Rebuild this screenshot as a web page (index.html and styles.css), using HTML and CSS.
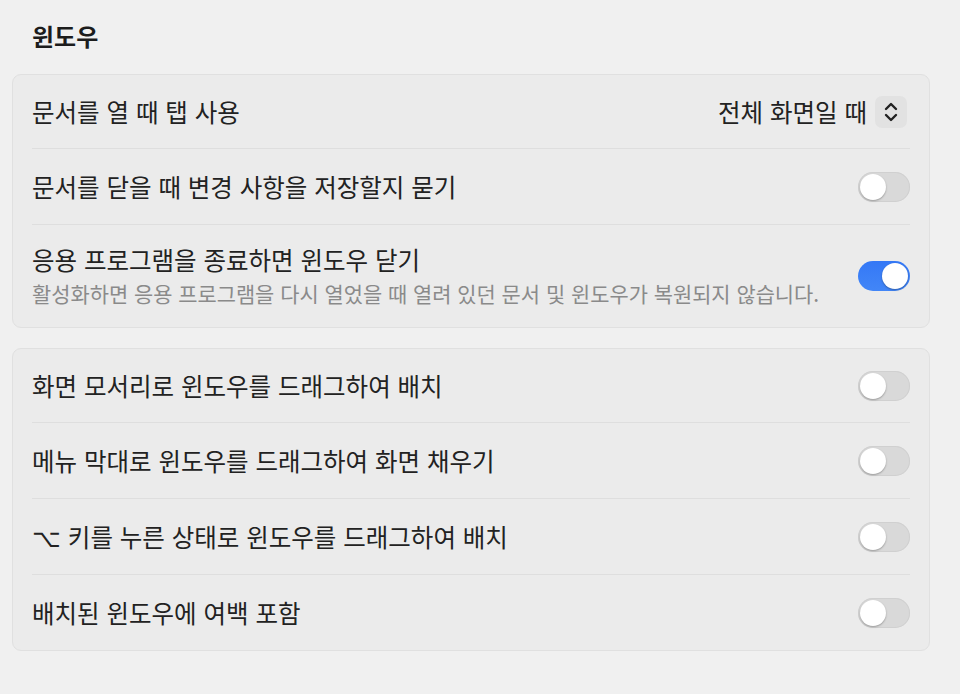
FILE: index.html
```html
<!DOCTYPE html>
<html lang="ko">
<head>
    <meta charset="UTF-8">
    <meta name="viewport" content="width=device-width, initial-scale=1.0">
    <title>윈도우</title>
    <link rel="stylesheet" href="styles.css">
</head>
<body>
    <div class="page">
        <h2 class="section-title">윈도우</h2>

        <div class="group">
            <div class="row">
                <div class="label">문서를 열 때 탭 사용</div>
                <div class="popup">
                    <span class="popup-value">전체 화면일 때</span>
                    <span class="popup-button">
                        <svg width="16" height="26" viewBox="0 0 16 26">
                            <path d="M3 10 L8 5 L13 10 M3 16 L8 21 L13 16" fill="none" stroke="#222" stroke-width="2.4" stroke-linecap="round" stroke-linejoin="round"/>
                        </svg>
                    </span>
                </div>
            </div>
            <div class="row">
                <div class="label">문서를 닫을 때 변경 사항을 저장할지 묻기</div>
                <div class="toggle"><span class="knob"></span></div>
            </div>
            <div class="row tall">
                <div class="text">
                    <div class="label">응용 프로그램을 종료하면 윈도우 닫기</div>
                    <div class="hint">활성화하면 응용 프로그램을 다시 열었을 때 열려 있던 문서 및 윈도우가 복원되지 않습니다.</div>
                </div>
                <div class="toggle on"><span class="knob"></span></div>
            </div>
        </div>

        <div class="group">
            <div class="row">
                <div class="label">화면 모서리로 윈도우를 드래그하여 배치</div>
                <div class="toggle"><span class="knob"></span></div>
            </div>
            <div class="row">
                <div class="label">메뉴 막대로 윈도우를 드래그하여 화면 채우기</div>
                <div class="toggle"><span class="knob"></span></div>
            </div>
            <div class="row">
                <div class="label">⌥ 키를 누른 상태로 윈도우를 드래그하여 배치</div>
                <div class="toggle"><span class="knob"></span></div>
            </div>
            <div class="row">
                <div class="label">배치된 윈도우에 여백 포함</div>
                <div class="toggle"><span class="knob"></span></div>
            </div>
        </div>
    </div>
</body>
</html>
```

FILE: styles.css
```css
body {
    margin: 0;
    background-color: #f0f0f0;
    font-family: "Noto Sans CJK KR", "Noto Sans", sans-serif;
    color: #222;
}
.page {
    width: 918px;
    padding: 17px 0 0 12px;
}
.section-title {
    margin: 0 0 19px 20px;
    font-size: 24px;
    font-weight: bold;
    line-height: 38px;
    color: #1c1c1c;
}
.group {
    background-color: #ebebeb;
    border: 1px solid #e0e0e0;
    border-radius: 9px;
    padding: 0 19px;
    margin-bottom: 20px;
}
.row {
    display: flex;
    align-items: center;
    justify-content: space-between;
    min-height: 75px;
}
.row:first-child {
    min-height: 73px;
}
.row + .row {
    border-top: 1px solid #dedede;
}
.row.tall {
    min-height: 102px;
}
.label {
    font-size: 24.5px;
    line-height: 30px;
}
.hint {
    font-size: 20.9px;
    line-height: 28px;
    color: #8a8a8a;
    margin-top: 4px;
}
.popup {
    display: flex;
    align-items: center;
    gap: 8px;
    margin-right: 3px;
}
.popup-value {
    font-size: 24.5px;
}
.popup-button {
    width: 32px;
    height: 32px;
    border-radius: 7px;
    background-color: #e2e2e2;
    display: flex;
    align-items: center;
    justify-content: center;
}
.toggle {
    width: 52px;
    height: 30px;
    border-radius: 15px;
    background-color: #d9d9d9;
    box-shadow: inset 0 0 0 1px #d0d0d0;
    position: relative;
    flex-shrink: 0;
}
.knob {
    position: absolute;
    top: 2px;
    left: 2px;
    width: 26px;
    height: 26px;
    border-radius: 50%;
    background-color: #fff;
    box-shadow: 0 1px 2px rgba(0,0,0,0.3);
}
.toggle.on {
    background: linear-gradient(#3478f6, #4286f7);
    box-shadow: none;
}
.toggle.on .knob {
    left: 24px;
}
```
